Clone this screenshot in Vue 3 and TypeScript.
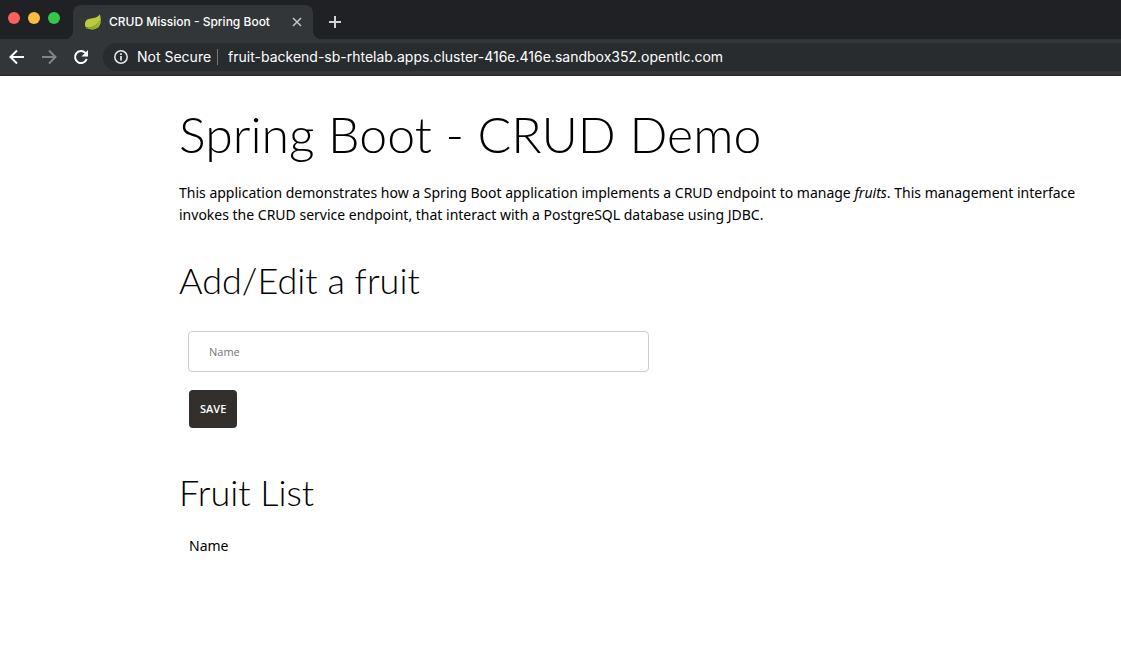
<script setup lang="ts">
import { ref } from 'vue'

interface Fruit {
  id: number
  name: string
}

const url = ref('fruit-backend-sb-rhtelab.apps.cluster-416e.416e.sandbox352.opentlc.com')
const name = ref('')
const fruits = ref<Fruit[]>([])

function save(): void {
  const value = name.value.trim()
  if (!value) return
  fruits.value.push({ id: fruits.value.length + 1, name: value })
  name.value = ''
}
</script>

<template>
  <div class="window">
    <header class="browser">
      <div class="tab-strip">
        <div class="lights">
          <button class="light red" type="button" aria-label="Close window"></button>
          <button class="light yellow" type="button" aria-label="Minimize window"></button>
          <button class="light green" type="button" aria-label="Zoom window"></button>
        </div>
        <div class="tab">
          <svg class="leaf" viewBox="0 0 18 18" aria-hidden="true">
            <path d="M15.8 1.200C17 5 17.400 9.500 15.400 13 13 16.800 7.500 17 3 15.600 0.400 13.500 0.300 9 2.600 6.900 6 4.300 12.500 6.500 15.800 1.200Z" fill="#bccb3e" />
            <path d="M3 15.600C8 15.600 14 13 16.200 9 16.300 14 10 18 3 15.600Z" fill="#8bab35" />
            <path d="M3 14.900C8 15 13 12.500 15.500 8" fill="none" stroke="#6b9131" stroke-width="0.900" />
            <circle cx="3" cy="15" r="1" fill="#5b7f2c" />
          </svg>
          <span class="tab-title">CRUD Mission - Spring Boot</span>
          <button class="icon-button tab-close" type="button" aria-label="Close tab">
            <svg width="10" height="10" viewBox="0 0 10 10"><path d="M1 1l8 8M9 1l-8 8" stroke="#c3c6ca" stroke-width="1.500" /></svg>
          </button>
        </div>
        <button class="icon-button new-tab" type="button" aria-label="New tab">
          <svg width="14" height="14" viewBox="0 0 14 14"><path d="M7 1v12M1 7h12" stroke="#d0d2d5" stroke-width="2" /></svg>
        </button>
      </div>
      <div class="toolbar">
        <nav class="nav" aria-label="Navigation">
          <button class="icon-button" type="button" aria-label="Back">
            <svg width="16" height="16" viewBox="0 0 16 16"><path d="M15 8H2M8 1.500L1.500 8 8 14.500" fill="none" stroke="#fff" stroke-width="2" /></svg>
          </button>
          <button class="icon-button" type="button" aria-label="Forward" disabled>
            <svg width="16" height="16" viewBox="0 0 16 16"><path d="M1 8h13M8 1.500L14.500 8 8 14.500" fill="none" stroke="#828588" stroke-width="2" /></svg>
          </button>
          <button class="icon-button" type="button" aria-label="Reload">
            <svg width="16" height="16" viewBox="0 0 16 16">
              <path d="M13.700 10A6 6 0 1 1 12.400 3.900" fill="none" stroke="#fff" stroke-width="2" />
              <path d="M15 1v6.500H8.500Z" fill="#fff" />
            </svg>
          </button>
        </nav>
        <div class="omnibox">
          <svg width="14" height="14" viewBox="0 0 14 14" aria-hidden="true">
            <circle cx="7" cy="7" r="6.200" fill="none" stroke="#e8eaed" stroke-width="1.500" />
            <path d="M7 6v4.500M7 3.300v1.600" stroke="#e8eaed" stroke-width="1.700" />
          </svg>
          <span class="security">Not Secure</span>
          <input v-model="url" class="url" type="text" aria-label="Address" spellcheck="false" />
        </div>
      </div>
    </header>

    <main class="page">
      <h1>Spring Boot - CRUD Demo</h1>
      <p>
        This application demonstrates how a Spring Boot application implements a CRUD endpoint to manage <em>fruits</em>.
        This management interface invokes the CRUD service endpoint, that interact with a PostgreSQL database using JDBC.
      </p>

      <h2>Add/Edit a fruit</h2>
      <form class="form" @submit.prevent="save">
        <input v-model="name" class="field" type="text" placeholder="Name" aria-label="Name" />
        <button class="save" type="submit">SAVE</button>
      </form>

      <h2>Fruit List</h2>
      <table class="list">
        <thead>
          <tr><th scope="col">Name</th></tr>
        </thead>
        <tbody>
          <tr v-for="fruit in fruits" :key="fruit.id"><td>{{ fruit.name }}</td></tr>
        </tbody>
      </table>
    </main>
  </div>
</template>

<style>
body {
  margin: 0;
  background: #fff;
}
</style>

<style scoped>
.window {
  min-height: 100vh;
  background: #fff;
  color: #000;
  font-family: "Noto Sans", "Open Sans", sans-serif;
}

.browser {
  font-family: Inter, Roboto, sans-serif;
  color: #fff;
}

.tab-strip {
  display: flex;
  height: 39px;
  box-sizing: border-box;
  padding-top: 5px;
  background: #202124;
}

.lights {
  display: flex;
  gap: 8px;
  width: 65px;
  padding: 7px 0 0 8px;
  box-sizing: border-box;
  margin-right: 8px;
}

.light {
  width: 12px;
  height: 12px;
  padding: 0;
  border: 0;
  border-radius: 50%;
}

.red { background: #fc605c; }
.yellow { background: #fdbc40; }
.green { background: #34c84a; }

.tab {
  position: relative;
  display: flex;
  align-items: center;
  width: 240px;
  box-sizing: border-box;
  padding: 0 11px;
  border-radius: 8px 8px 0 0;
  background: #323639;
}

.tab::before,
.tab::after {
  content: "";
  position: absolute;
  bottom: 0;
  width: 8px;
  height: 8px;
}

.tab::before {
  right: 100%;
  background: radial-gradient(circle at 0 0, transparent 8px, #323639 8px);
}

.tab::after {
  left: 100%;
  background: radial-gradient(circle at 100% 0, transparent 8px, #323639 8px);
}

.leaf {
  width: 18px;
  height: 18px;
  margin-right: 7px;
}

.tab-title {
  flex: 1;
  padding-bottom: 2px;
  font-size: 12px;
  font-weight: 500;
  white-space: nowrap;
}

.icon-button {
  display: flex;
  align-items: center;
  justify-content: center;
  padding: 0;
  border: 0;
  background: none;
}

.new-tab {
  margin-left: 15px;
}

.toolbar {
  display: flex;
  align-items: center;
  height: 37px;
  box-sizing: border-box;
  padding-left: 9px;
  background: #323639;
  border-bottom: 1px solid #222426;
}

.nav {
  display: flex;
  gap: 16px;
  margin-right: 14px;
}

.omnibox {
  display: flex;
  flex: 1;
  align-items: center;
  height: 28px;
  padding-left: 11px;
  border-radius: 14px 0 0 14px;
  background: #282c2f;
  font-size: 14px;
  line-height: 16px;
}

.security {
  margin-left: 9px;
  padding-right: 6px;
  border-right: 1px solid #777a7d;
  white-space: nowrap;
}

.url {
  flex: 1;
  min-width: 0;
  padding: 0 0 0 10px;
  border: 0;
  outline: 0;
  background: none;
  color: #fff;
  font: inherit;
}

.page {
  padding: 28px 20px 24px 179px;
}

h1,
h2 {
  margin: 0;
  font-family: Lato, "Open Sans", sans-serif;
  font-weight: 300;
}

h1 {
  font-size: 50px;
  line-height: 60px;
}

h2 {
  font-size: 36px;
  line-height: 44px;
}

p {
  margin: 18px 0 32px;
  font-size: 14px;
  line-height: 22px;
}

.form {
  display: flex;
  flex-direction: column;
  align-items: flex-start;
  gap: 18px;
  margin: 29px 0 42px;
  padding: 0 9px;
}

.field {
  width: 51%;
  height: 41px;
  box-sizing: border-box;
  padding: 0 20px;
  border: 1px solid #ccc;
  border-radius: 4px;
  color: #000;
  font: 11px "Open Sans", sans-serif;
}

.field::placeholder {
  color: #777;
}

.save {
  height: 38px;
  margin-left: 1px;
  padding: 0 11px 2px;
  border: 0;
  border-radius: 4px;
  background: #322f2d;
  color: #fff;
  font: 600 11px "Open Sans", sans-serif;
}

.list {
  margin-top: 21px;
  border-spacing: 0;
  font-size: 14px;
  line-height: 22px;
}

.list th,
.list td {
  padding: 0 10px;
  font-weight: 400;
  text-align: left;
}
</style>
